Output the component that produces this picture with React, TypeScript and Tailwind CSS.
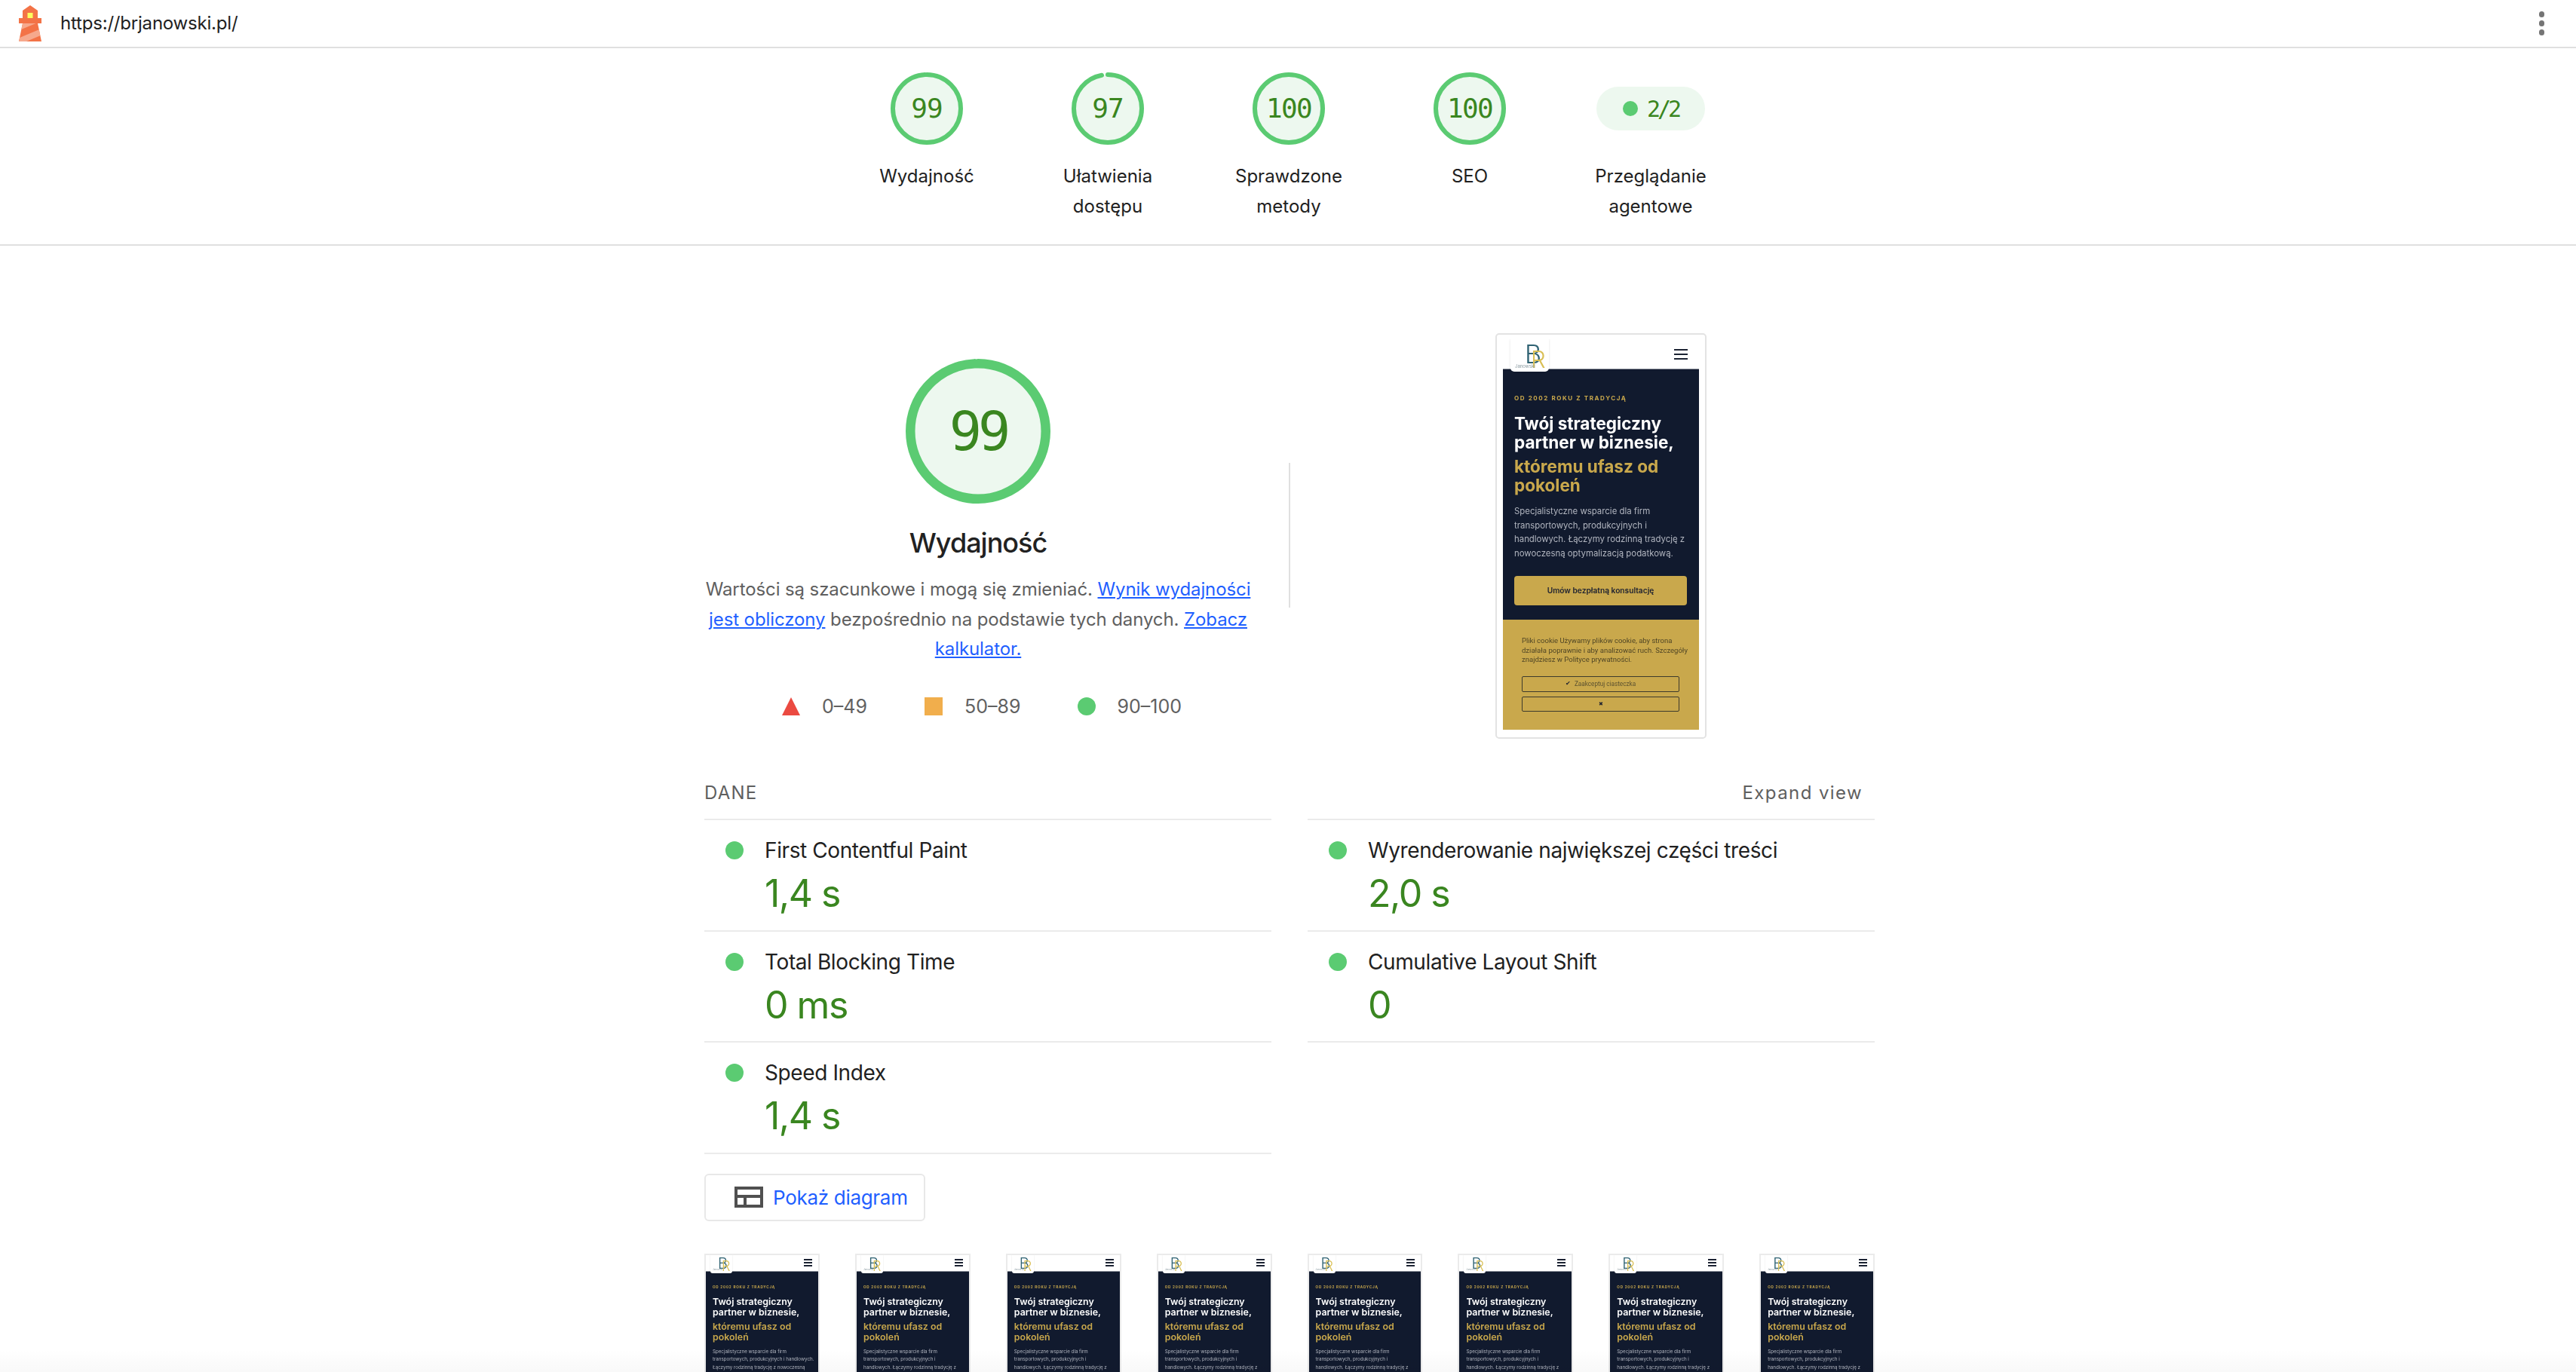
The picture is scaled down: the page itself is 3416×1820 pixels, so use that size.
const inter = "font-['Inter','Liberation_Sans',sans-serif]";

function Dot({ className }: { className: string }) {
  return <span className={`block rounded-full bg-[#5bcb72] ${className}`} />;
}

function Gauge({ value, big }: { value: number; big?: boolean }) {
  const size = big ? 192 : 96;
  const sw = big ? 12.5 : 6;
  const r = (size - sw) / 2;
  const c = 2 * Math.PI * r;
  return (
    <div className={big ? "relative h-[192px] w-[192px]" : "relative h-[96px] w-[96px]"}>
      <svg width={size} height={size} viewBox={`0 0 ${size} ${size}`} className="block -rotate-90">
        <circle cx={size / 2} cy={size / 2} r={r} fill="#edf8ef" />
        <circle
          cx={size / 2}
          cy={size / 2}
          r={r}
          fill="none"
          stroke="#5bcb72"
          strokeWidth={sw}
          strokeLinecap={value === 100 ? "butt" : "round"}
          strokeDasharray={`${(c * value) / 100} ${c}`}
        />
      </svg>
      <div
        className={`absolute inset-0 flex items-center justify-center font-['DejaVu_Sans_Mono','Liberation_Mono',monospace] text-[#3a8620] ${
          big ? "text-[72px] tracking-[-5px]" : value === 100 ? "text-[36px] tracking-[-1.7px]" : "text-[36px] tracking-[-1px]"
        }`}
      >
        {value}
      </div>
    </div>
  );
}

function Category({ label, children }: { label: React.ReactNode; children: React.ReactNode }) {
  return (
    <div className="flex w-[240px] flex-col items-center">
      <div className="flex h-[96px] items-center justify-center">{children}</div>
      <div className="mt-[22px] text-center text-[24px] leading-[40px] text-[#212121]">{label}</div>
    </div>
  );
}

function Metric({ label, value }: { label: string; value: string }) {
  return (
    <div className="flex h-[147.5px] border-b-2 border-[#ebebeb] pl-7 pt-[21px]">
      <Dot className="mt-[7px] h-6 w-6 shrink-0" />
      <div className="ml-[28px]">
        <div className="text-[28px] leading-[38px] tracking-[-0.4px] text-[#212121]">{label}</div>
        <div className="mt-[7px] text-[50px] leading-[62px] tracking-[-1.5px] text-[#3a8620]">{value}</div>
      </div>
    </div>
  );
}

function Logo({ big }: { big?: boolean }) {
  if (big) {
    return (
      <div className="absolute left-[10px] top-[0px] h-[43px] w-[51px] rounded-b-[5px] bg-white shadow-[0_0_3px_rgba(0,0,0,0.12)]">
        <span className="absolute left-[19px] top-[2px] text-[34px] font-light leading-[36px] text-[#2f6272]">B</span>
        <span className="absolute left-[27px] top-[9px] text-[31px] font-light leading-[36px] text-[#d9bf55]">R</span>
        <span className="absolute left-[6px] top-[32px] text-[6px] leading-[7px] text-[#8a9aa0]">Janowski</span>
      </div>
    );
  }
  return (
    <div className="absolute left-[6px] top-0 h-[24px] w-[29px] rounded-b-[3px] bg-white shadow-[0_0_2px_rgba(0,0,0,0.12)]">
      <span className="absolute left-[10px] top-[1px] text-[20px] font-light leading-[21px] text-[#2f6272]">B</span>
      <span className="absolute left-[15px] top-[4px] text-[18px] font-light leading-[21px] text-[#d9bf55]">R</span>
      <span className="absolute left-[3px] top-[17px] text-[3px] leading-[5px] text-[#8a9aa0]">Janowski</span>
    </div>
  );
}

function Burger({ big }: { big?: boolean }) {
  return (
    <div className={big ? "flex w-[18px] flex-col gap-[4px]" : "flex w-[11px] flex-col gap-[2.5px]"}>
      {[0, 1, 2].map((i) => (
        <span key={i} className={big ? "block h-[2px] bg-[#1c2333]" : "block h-[1.5px] bg-[#1c2333]"} />
      ))}
    </div>
  );
}

function BigShot() {
  return (
    <div className="h-[538px] w-[280px] rounded-[5px] border-2 border-[#e3e3e3] bg-white px-[8px] pt-[6px]">
      <div className={`h-[518px] w-[260px] overflow-hidden blur-[0.35px] ${inter}`}>
        <div className="relative flex h-[40px] items-center justify-end border-b border-[#8a8f99] bg-white pr-[15px]">
          <Burger big />
          <Logo big />
        </div>
        <div className="h-[332px] bg-[#111a2e] px-[15px] pt-[32px]">
          <div className="whitespace-nowrap text-[8px] font-bold leading-[12px] tracking-[1.6px] text-[#c9a84c]">OD 2002 ROKU Z TRADYCJĄ</div>
          <div className="mt-[15px] whitespace-nowrap text-[22.5px] font-bold leading-[25px] text-white">
            Twój strategiczny
            <br />
            partner w biznesie,
          </div>
          <div className="mt-[7px] whitespace-nowrap text-[22.5px] font-bold leading-[25px] text-[#c9a84c]">
            któremu ufasz od
            <br />
            pokoleń
          </div>
          <div className="mt-[13px] whitespace-nowrap text-[11.4px] leading-[18.5px] text-[#b1b5bf]">
            Specjalistyczne wsparcie dla firm
            <br />
            transportowych, produkcyjnych i
            <br />
            handlowych. Łączymy rodzinną tradycję z
            <br />
            nowoczesną optymalizacją podatkową.
          </div>
          <div className="mt-[21px] flex h-[39px] w-[229px] items-center justify-center rounded-[4px] bg-[#c9a84c] text-[10.2px] font-semibold text-[#1c2030]">
            Umów bezpłatną konsultację
          </div>
        </div>
        <div className="h-[146px] bg-[#c9a84c] px-[25px] pt-[22px] font-['Roboto',sans-serif]">
          <div className="whitespace-nowrap text-[9.5px] leading-[12.6px] text-[#4f4525]">
            Pliki cookie Używamy plików cookie, aby strona
            <br />
            działała poprawnie i aby analizować ruch. Szczegóły
            <br />
            znajdziesz w Polityce prywatności.
          </div>
          <div className="mt-[15px] flex h-[21px] w-[209px] items-center justify-center gap-[5px] rounded-[2px] border border-[#3d3a2c] text-[8.2px] text-[#5c5230]">
            <span className="text-[8px] text-[#1c2030]">✔</span>Zaakceptuj ciasteczka
          </div>
          <div className="mt-[6px] flex h-[20px] w-[209px] items-center justify-center rounded-[2px] border border-[#3d3a2c] text-[7.4px] text-[#1c2030]">
            ✖
          </div>
        </div>
      </div>
    </div>
  );
}

function Thumb({ first }: { first?: boolean }) {
  return (
    <div className="h-[170px] w-[153px] border-2 border-b-0 border-[#ebebeb] bg-white">
      <div className={`h-full w-full overflow-hidden blur-[0.3px] ${inter}`}>
        <div className="relative flex h-[22px] items-center justify-end border-b border-[#8a8f99] bg-white pr-[8px]">
          <Burger />
          <Logo />
        </div>
        <div className="h-[148px] bg-[#111a2e] px-[9px] pt-[17px]">
          <div className="whitespace-nowrap text-[4.6px] font-bold leading-[7px] tracking-[0.8px] text-[#c9a84c]">OD 2002 ROKU Z TRADYCJĄ</div>
          <div className="mt-[9px] whitespace-nowrap text-[12.4px] font-semibold leading-[14.5px] text-white">
            Twój strategiczny
            <br />
            partner w biznesie,
          </div>
          <div className="mt-[4px] whitespace-nowrap text-[12.4px] font-semibold leading-[14.5px] text-[#c9a84c]">
            któremu ufasz od
            <br />
            pokoleń
          </div>
          <div className="mt-[6px] whitespace-nowrap text-[6.2px] leading-[10.7px] text-[#b1b5bf]">
            Specjalistyczne wsparcie dla firm
            <br />
            {first ? "transportowych, produkcyjnych i handlowych." : "transportowych, produkcyjnych i"}
            <br />
            {first ? "Łączymy rodzinną tradycję z nowoczesną" : "handlowych. Łączymy rodzinną tradycję z"}
          </div>
        </div>
      </div>
    </div>
  );
}

export default function App() {
  return (
    <div className={`relative h-[1820px] w-[3416px] overflow-hidden bg-white ${inter}`}>
      <header className="flex h-[64px] items-center border-b-2 border-[#e0e0e0] pl-4 pr-[42px]">
        <svg width="48" height="48" viewBox="0 0 48 48" className="shrink-0">
          <path d="m14 7 10-7 10 7v10h5v7h-5l5 24H9l5-24H9v-7h5V7Z" fill="#f37347" />
          <path d="M31.561 24H14l-1.689 8.105L31.561 24ZM18.983 48H9l1.022-4.907L35.723 32.27l1.663 7.98L18.983 48Z" fill="#f6a98d" />
          <path fill="#fdfd5e" d="M20.5 10h7v7h-7z" />
        </svg>
        <span className="ml-4 text-[24px] tracking-[-0.2px] text-[#212121]">https://brjanowski.pl/</span>
        <div className="ml-auto flex flex-col gap-[4.5px]">
          <Dot className="h-[7.5px] w-[7.5px] !bg-[#757575]" />
          <Dot className="h-[7.5px] w-[7.5px] !bg-[#757575]" />
          <Dot className="h-[7.5px] w-[7.5px] !bg-[#757575]" />
        </div>
      </header>

      <section className="h-[262px] border-b-2 border-[#e0e0e0] pl-[1109px] pt-8">
        <div className="flex">
          <Category label="Wydajność"><Gauge value={99} /></Category>
          <Category label={<>Ułatwienia<br />dostępu</>}><Gauge value={97} /></Category>
          <Category label={<>Sprawdzone<br />metody</>}><Gauge value={100} /></Category>
          <Category label="SEO"><Gauge value={100} /></Category>
          <Category label={<>Przeglądanie<br />agentowe</>}>
            <div className="flex h-[58px] w-[144px] items-center justify-center gap-3 rounded-[30px] bg-[#edf8ef] font-['DejaVu_Sans_Mono',monospace] text-[30px] tracking-[-4px] text-[#3a8620]">
              <Dot className="h-5 w-5" />
              <span>2/2</span>
            </div>
          </Category>
        </div>
      </section>

      <main className="ml-[934px] w-[1552px] pt-[116px]">
        <div className="flex">
          <div className="flex w-[726px] flex-col items-center pt-[34px]">
            <Gauge value={99} big />
            <h1 className="mt-[30px] text-[36px] font-medium leading-[44px] tracking-[-1px] text-[#212121]">Wydajność</h1>
            <p className="mt-[20px] whitespace-nowrap text-center text-[24px] leading-[39.6px] tracking-[-0.1px] text-[#5f5f5f]">
              Wartości są szacunkowe i mogą się zmieniać.{" "}
              <a className="text-[#1f5fff] underline">Wynik wydajności</a>
              <br />
              <a className="text-[#1f5fff] underline">jest obliczony</a> bezpośrednio na podstawie tych danych.{" "}
              <a className="text-[#1f5fff] underline">Zobacz</a>
              <br />
              <a className="text-[#1f5fff] underline">kalkulator.</a>
            </p>
            <div className="mt-[40px] flex items-center pl-[10px] text-[25px] leading-[32px] text-[#616161]">
              <svg width="24" height="24" viewBox="0 0 24 24"><path d="M12 0 24 24H0Z" fill="#eb4a41" /></svg>
              <span className="ml-[29px]">0–49</span>
              <span className="ml-[76px] block h-6 w-6 bg-[#f1ae4c]" />
              <span className="ml-[29px]">50–89</span>
              <Dot className="ml-[76px] h-6 w-6" />
              <span className="ml-[28px]">90–100</span>
            </div>
          </div>
          <div className="ml-[49px] mt-[172px] h-[192px] w-[2px] bg-[#e0e0e0]" />
          <div className="ml-[272px]">
            <BigShot />
          </div>
        </div>

        <div className="mt-[52px] flex h-[54px] items-start justify-between text-[24px] leading-[40px] text-[#5f5f5f]">
          <span className="tracking-[1.2px]">DANE</span>
          <span className="mr-[16px] tracking-[1.4px]">Expand view</span>
        </div>
        <div className="grid grid-cols-[752px_752px] gap-x-[48px]">
          <div className="border-t-2 border-[#ebebeb]">
            <Metric label="First Contentful Paint" value="1,4 s" />
            <Metric label="Total Blocking Time" value="0 ms" />
            <Metric label="Speed Index" value="1,4 s" />
          </div>
          <div className="border-t-2 border-[#ebebeb]">
            <Metric label="Wyrenderowanie największej części treści" value="2,0 s" />
            <Metric label="Cumulative Layout Shift" value="0" />
          </div>
        </div>

        <button className="mt-[26px] flex h-[63px] w-[293px] items-center rounded-[6px] border-2 border-[#e8e8e8] pl-[38px] text-[26px] tracking-[-0.3px] text-[#1f5fff]">
          <svg width="38" height="28" viewBox="0 0 38 28" className="shrink-0">
            <path fillRule="evenodd" d="M0 0h38v28H0ZM4 4v7h30V4ZM4 15v9h8v-9Zm12 0v9h18v-9Z" fill="#505050" />
          </svg>
          <span className="ml-[13px]">Pokaż diagram</span>
        </button>

        <div className="mt-[43px] flex gap-[47px]">
          <Thumb first />
          {[1, 2, 3, 4, 5, 6, 7].map((i) => (
            <Thumb key={i} />
          ))}
        </div>
      </main>
      <div className="absolute inset-x-0 bottom-0 h-[30px] bg-gradient-to-t from-black/[0.025] to-black/0" />
    </div>
  );
}
